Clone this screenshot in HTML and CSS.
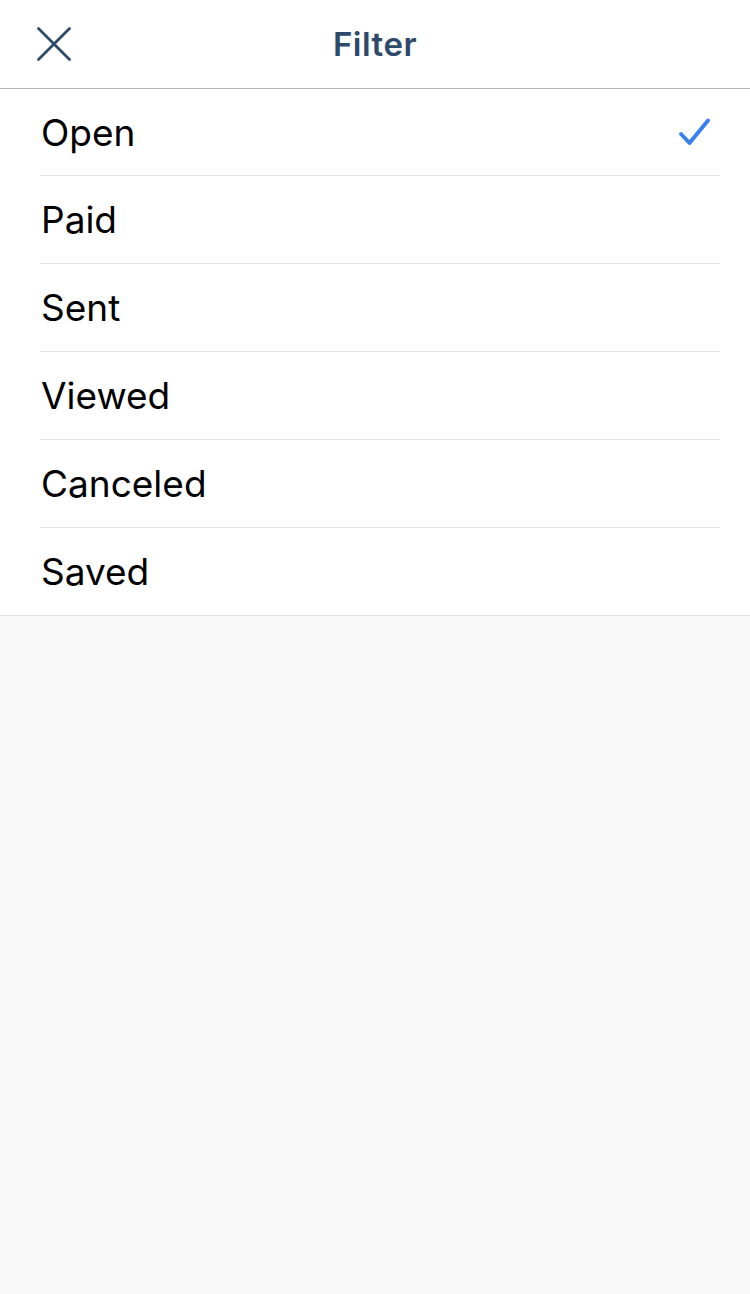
FILE: index.html
```html
<!DOCTYPE html>
<html>
<head>
<meta charset="utf-8">
<link rel="stylesheet" href="styles.css">
</head>
<body>
<header class="nav">
  <button class="close" aria-label="Close">
    <svg width="36" height="36" viewBox="0 0 36 36"><path d="M2.5 2.5 L33.5 33.5 M33.5 2.5 L2.5 33.5" stroke="#2e4a6a" stroke-width="2.8" stroke-linecap="round" fill="none"/></svg>
  </button>
  <h1 class="title">Filter</h1>
</header>
<ul class="list">
  <li class="row"><span>Open</span>
    <svg class="check" width="34" height="32" viewBox="0 0 34 32"><path d="M3 18 L11.5 27 L30 4.5" stroke="#3b80f0" stroke-width="4" stroke-linecap="round" stroke-linejoin="round" fill="none"/></svg>
  </li>
  <li class="row"><span>Paid</span></li>
  <li class="row"><span>Sent</span></li>
  <li class="row"><span>Viewed</span></li>
  <li class="row"><span>Canceled</span></li>
  <li class="row"><span>Saved</span></li>
</ul>
</body>
</html>
```
FILE: styles.css
```css
html, body {
  margin: 0;
  padding: 0;
  background: #f8f8f8;
  font-family: "Inter", "Roboto", "Liberation Sans", sans-serif;
}
.nav {
  height: 88px;
  background: #fff;
  border-bottom: 1px solid #b3b3b3;
  display: flex;
  align-items: center;
  justify-content: center;
  position: relative;
}
.close {
  position: absolute;
  left: 36px;
  top: 26px;
  padding: 0;
  border: 0;
  background: none;
  width: 36px;
  height: 36px;
}
.close svg { display: block; }
.title {
  margin: 0;
  font-size: 33px;
  font-weight: 600;
  color: #2e4a6a;
  letter-spacing: 0.5px;
}
.list {
  list-style: none;
  margin: 0;
  padding: 0 30px 0 40px;
  background: #fff;
  border-bottom: 1px solid #dde2e5;
}
.row {
  height: 87px;
  display: flex;
  align-items: center;
  justify-content: space-between;
  border-bottom: 1px solid #e6e6e6;
  font-size: 37px;
  color: #000;
}
.row:first-child { height: 86px; }
.row:last-child { border-bottom: 0; }
.row span { padding-left: 1px; }
.check { margin-right: 8px; }
```
